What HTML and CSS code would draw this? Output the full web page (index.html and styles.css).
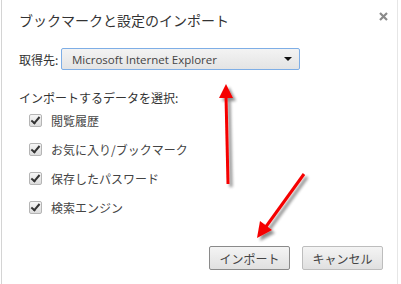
FILE: index.html
```html
<!DOCTYPE html>
<html lang="ja">
<head>
  <meta charset="UTF-8">
  <title>ブックマークと設定のインポート</title>
  <link rel="stylesheet" href="styles.css">
</head>
<body>
  <div class="dialog">
    <div class="dialog-head">
      <h1 class="dialog-title">ブックマークと設定のインポート</h1>
      <span class="dialog-close">
        <svg width="9" height="9" viewBox="0 0 9 9"><path d="M1 1L8 8M8 1L1 8" stroke="#8a8a8a" stroke-width="2.2"/></svg>
      </span>
    </div>

    <div class="source-row">
      <span class="source-label">取得先:</span>
      <div class="select">
        <span>Microsoft Internet Explorer</span>
        <span class="select-arrow"></span>
      </div>
    </div>

    <p class="group-label">インポートするデータを選択:</p>
    <ul class="options">
      <li><span class="check"></span>閲覧履歴</li>
      <li><span class="check"></span>お気に入り/ブックマーク</li>
      <li><span class="check"></span>保存したパスワード</li>
      <li><span class="check"></span>検索エンジン</li>
    </ul>

    <div class="buttons">
      <button class="btn btn-default">インポート</button>
      <button class="btn">キャンセル</button>
    </div>

    <!-- annotation arrows -->
    <svg class="arrows" width="401" height="284" viewBox="0 0 401 284">
      <defs>
        <filter id="sh" x="-50%" y="-50%" width="200%" height="200%">
          <feGaussianBlur in="SourceAlpha" stdDeviation="1.5"/>
          <feOffset dx="3" dy="3"/>
          <feComponentTransfer><feFuncA type="linear" slope="0.45"/></feComponentTransfer>
          <feMerge><feMergeNode/><feMergeNode in="SourceGraphic"/></feMerge>
        </filter>
      </defs>
      <g filter="url(#sh)" fill="#f50000" stroke="#f50000">
        <line x1="228" y1="184" x2="226" y2="96" stroke-width="3"/>
        <polygon points="226,84 233,98 219,98" stroke="none"/>
        <line x1="304" y1="174" x2="265" y2="228" stroke-width="3"/>
        <polygon points="257,238 260,221 272,230" stroke="none"/>
      </g>
    </svg>
  </div>
</body>
</html>
```

FILE: styles.css
```css
body {
  margin: 0;
  padding: 0;
  background: #fff;
  font-family: "Noto Sans CJK JP", "Noto Sans", sans-serif;
  color: #333;
}

.dialog {
  position: relative;
  width: 397px;
  height: 284px;
  margin-left: 1px;
  border-left: 1px solid #d4d4d4;
  border-right: 1px solid #e6e6e6;
  background: #fff;
  box-sizing: border-box;
  padding: 0 0 0 17px;
}

.dialog-head {
  display: flex;
  justify-content: space-between;
  align-items: flex-start;
  padding-top: 9px;
}

.dialog-title {
  margin: 0;
  font-size: 14px;
  font-weight: normal;
  line-height: 22px;
  color: #333;
}

.dialog-close {
  display: flex;
  margin: 3px 9px 0 0;
}

.source-row {
  display: flex;
  align-items: center;
  margin-top: 17px;
}

.source-label {
  font-size: 12px;
  width: 42px;
}

.select {
  display: flex;
  justify-content: space-between;
  align-items: center;
  width: 239px;
  height: 22px;
  box-sizing: border-box;
  padding: 0 7px 0 10px;
  border: 1px solid #7eaee6;
  border-radius: 2px;
  background: linear-gradient(#f3f3f3, #e4e4e4);
  font-family: "Open Sans", "Noto Sans", sans-serif;
  font-size: 11.5px;
  color: #444;
}

.select-arrow {
  width: 0;
  height: 0;
  border-left: 4px solid transparent;
  border-right: 4px solid transparent;
  border-top: 4px solid #111;
}

.group-label {
  margin: 20px 0 0;
  font-size: 12px;
  line-height: 16px;
}

.options {
  list-style: none;
  margin: 0;
  padding: 0 0 0 10px;
}

.options li {
  display: flex;
  align-items: center;
  height: 29px;
  font-size: 12px;
  color: #444;
}

.options li:first-child {
  height: 20px;
  margin-top: 4px;
  margin-bottom: 5px;
}

.check {
  position: relative;
  width: 11px;
  height: 11px;
  margin-right: 9px;
  border: 1px solid #b5b5b5;
  border-radius: 2px;
  background: linear-gradient(#f6f6f6, #dcdcdc);
}

.check::after {
  content: "";
  position: absolute;
  left: 3px;
  top: 0;
  width: 3px;
  height: 7px;
  border: solid #333;
  border-width: 0 2px 2px 0;
  transform: rotate(40deg);
}

.buttons {
  display: flex;
  justify-content: flex-end;
  gap: 12px;
  margin-top: 24px;
  padding-right: 14px;
}

.btn {
  width: 81px;
  height: 24px;
  border: 1px solid #bdbdbd;
  border-radius: 2px;
  background: linear-gradient(#f4f4f4, #e0e0e0);
  font-family: "Noto Sans CJK JP", sans-serif;
  font-size: 12px;
  color: #444;
  padding: 0;
}

.btn-default {
  border-color: #8a8a8a;
}

.arrows {
  position: absolute;
  left: -2px;
  top: 0;
  pointer-events: none;
}
```
